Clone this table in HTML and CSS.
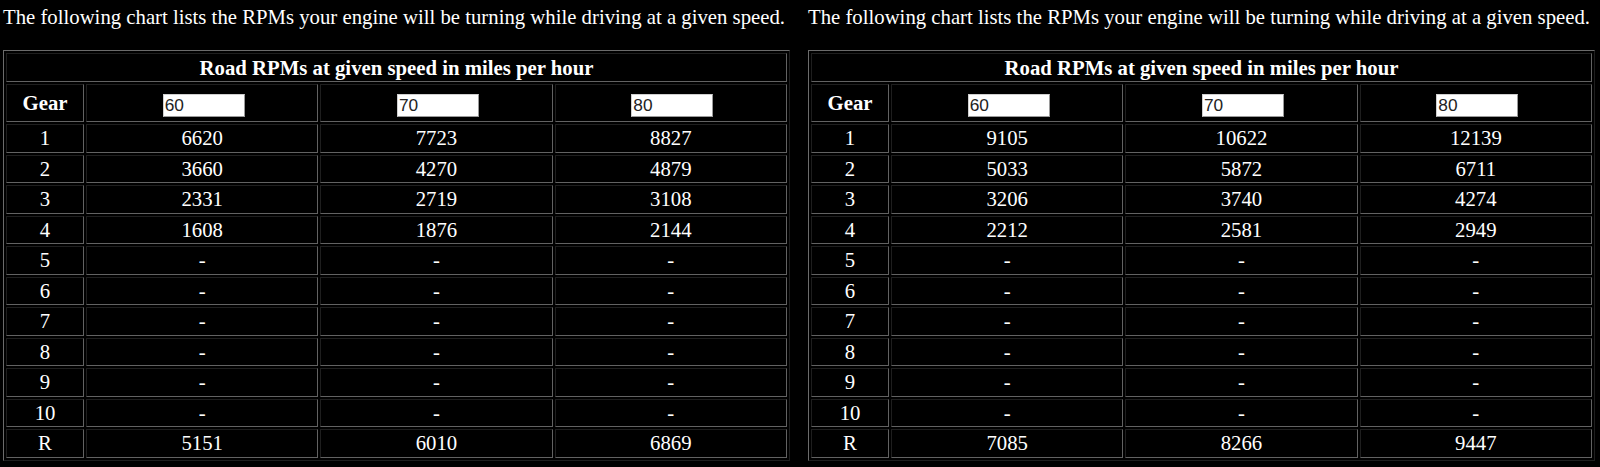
FILE: index.html
```html
<!DOCTYPE html>
<html>
<head>
<meta charset="utf-8">
<title>Road RPMs</title>
<link rel="stylesheet" href="styles.css">
</head>
<body>
<div class="page">
  <section class="block">
    <p class="intro">The following chart lists the RPMs your engine will be turning while driving at a given speed.</p>
    <table class="rpm">
      <colgroup><col class="col-gear"><col><col><col></colgroup>
      <tr><th colspan="4" class="title">Road RPMs at given speed in miles per hour</th></tr>
      <tr class="speeds"><th>Gear</th><td><input type="text" value="60"></td><td><input type="text" value="70"></td><td><input type="text" value="80"></td></tr>
      <tr><td>1</td><td>6620</td><td>7723</td><td>8827</td></tr>
      <tr><td>2</td><td>3660</td><td>4270</td><td>4879</td></tr>
      <tr><td>3</td><td>2331</td><td>2719</td><td>3108</td></tr>
      <tr><td>4</td><td>1608</td><td>1876</td><td>2144</td></tr>
      <tr><td>5</td><td>-</td><td>-</td><td>-</td></tr>
      <tr><td>6</td><td>-</td><td>-</td><td>-</td></tr>
      <tr><td>7</td><td>-</td><td>-</td><td>-</td></tr>
      <tr><td>8</td><td>-</td><td>-</td><td>-</td></tr>
      <tr><td>9</td><td>-</td><td>-</td><td>-</td></tr>
      <tr><td>10</td><td>-</td><td>-</td><td>-</td></tr>
      <tr><td>R</td><td>5151</td><td>6010</td><td>6869</td></tr>
    </table>
  </section>
  <section class="block">
    <p class="intro">The following chart lists the RPMs your engine will be turning while driving at a given speed.</p>
    <table class="rpm">
      <colgroup><col class="col-gear"><col><col><col></colgroup>
      <tr><th colspan="4" class="title">Road RPMs at given speed in miles per hour</th></tr>
      <tr class="speeds"><th>Gear</th><td><input type="text" value="60"></td><td><input type="text" value="70"></td><td><input type="text" value="80"></td></tr>
      <tr><td>1</td><td>9105</td><td>10622</td><td>12139</td></tr>
      <tr><td>2</td><td>5033</td><td>5872</td><td>6711</td></tr>
      <tr><td>3</td><td>3206</td><td>3740</td><td>4274</td></tr>
      <tr><td>4</td><td>2212</td><td>2581</td><td>2949</td></tr>
      <tr><td>5</td><td>-</td><td>-</td><td>-</td></tr>
      <tr><td>6</td><td>-</td><td>-</td><td>-</td></tr>
      <tr><td>7</td><td>-</td><td>-</td><td>-</td></tr>
      <tr><td>8</td><td>-</td><td>-</td><td>-</td></tr>
      <tr><td>9</td><td>-</td><td>-</td><td>-</td></tr>
      <tr><td>10</td><td>-</td><td>-</td><td>-</td></tr>
      <tr><td>R</td><td>7085</td><td>8266</td><td>9447</td></tr>
    </table>
  </section>
</div>
</body>
</html>
```

FILE: styles.css
```css
html, body {
  margin: 0;
  background: #000;
}

body {
  color: #fff;
  font-family: "Liberation Serif", "Times New Roman", serif;
  font-size: 20.75px;
}

.page {
  display: flex;
  gap: 18px;
  padding-left: 3px;
}

.block {
  width: 787px;
  flex: none;
}

.intro {
  margin: 5px 0 21px;
  line-height: 24px;
  white-space: nowrap;
}

.rpm {
  width: 100%;
  table-layout: fixed;
  border-collapse: separate;
  border-spacing: 2px;
  border: 1px solid;
  border-color: #6b6b6b #1e1e1e #1e1e1e #6b6b6b;
}

.col-gear {
  width: 78px;
}

.rpm th,
.rpm td {
  padding: 1px 0 0;
  text-align: center;
  line-height: 25.5px;
  border: 1px solid;
  border-color: #1e1e1e #626262 #626262 #1e1e1e;
}

.rpm th {
  font-weight: bold;
}

.rpm .title {
  line-height: 26px;
}

.speeds th,
.speeds td {
  padding: 0;
  line-height: 36px;
}

.speeds input {
  box-sizing: border-box;
  width: 82px;
  height: 23px;
  margin: 0 0 0 3px;
  padding: 0 0 0 1px;
  border: 1px solid;
  border-color: #cfcfcf #9a9a9a #9a9a9a #cfcfcf;
  background: #fff;
  color: #222;
  font-family: "Liberation Sans", Arial, sans-serif;
  font-size: 17.3px;
  vertical-align: middle;
}
```
